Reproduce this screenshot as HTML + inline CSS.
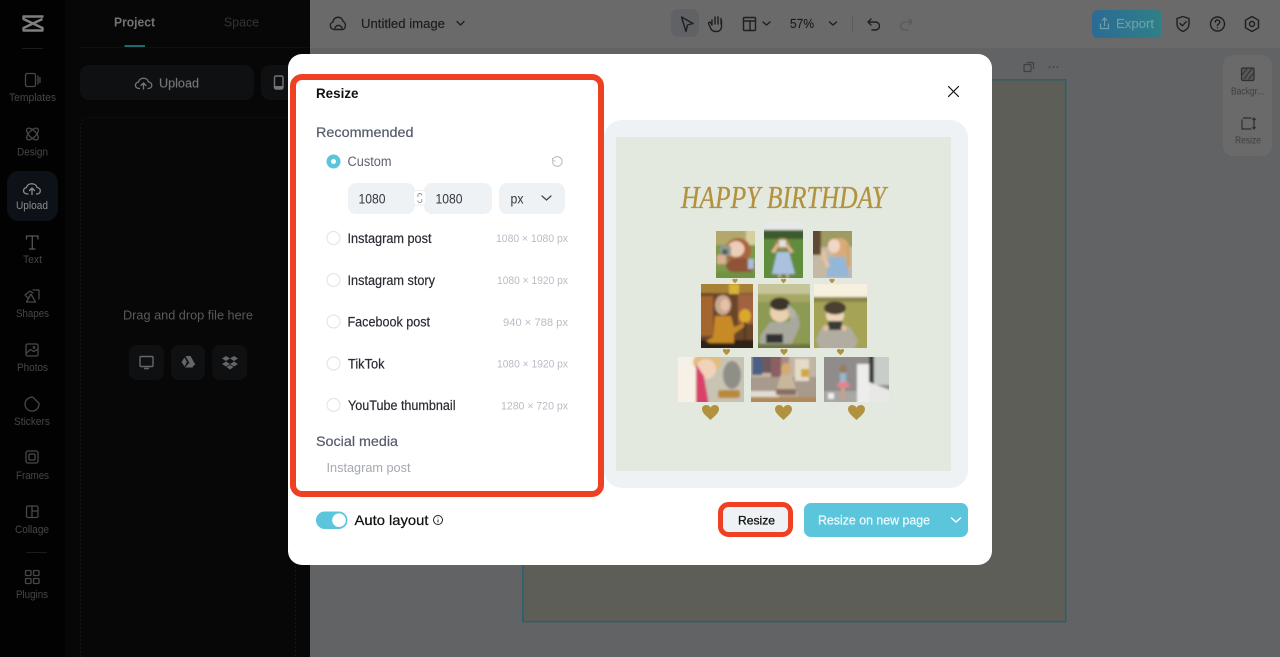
<!DOCTYPE html>
<html><head><meta charset="utf-8"><title>Resize</title>
<style>
html,body{margin:0;padding:0;width:1280px;height:657px;overflow:hidden;background:#626365}
svg{display:block}
text{font-family:"Liberation Sans",sans-serif}
.nav{font-size:11px;fill:#474747}
.ic{fill:none;stroke:#484848;stroke-width:1.3;stroke-linecap:round;stroke-linejoin:round}
.tb{fill:none;stroke:#1f1f1f;stroke-width:1.4;stroke-linecap:round;stroke-linejoin:round}
.row{font-size:13.5px;fill:#2a2c33;stroke:#2a2c33;stroke-width:.2}
.dim{font-size:11px;fill:#b7bcc4}
</style></head><body>
<svg width="1280" height="657" viewBox="0 0 1280 657" xmlns="http://www.w3.org/2000/svg">
<defs>
<path id="hb" d="M0 7.500C-5 3-8.500 0-8.500-3.500C-8.500-6-6.500-7.500-4.500-7.500C-2.500-7.500-.8-6.500 0-4.800C.8-6.500 2.500-7.500 4.500-7.500C6.500-7.500 8.500-6 8.500-3.500C8.500 0 5 3 0 7.500Z"/>
<filter id="b" x="-10%" y="-10%" width="120%" height="120%"><feGaussianBlur stdDeviation="1"/></filter>
<linearGradient id="exp" x1="0" x2="1"><stop offset="0" stop-color="#2b6b95"/><stop offset="1" stop-color="#2f8087"/></linearGradient>
</defs>

<!-- base -->
<rect width="1280" height="657" fill="#626365"/>
<rect x="310" width="970" height="48" fill="#6a6a6a"/>
<rect width="65" height="657" fill="#020202"/>
<rect x="65" width="245" height="657" fill="#070707"/>

<!-- sidebar -->
<path d="M43.500 16.500H23.500V19L42.500 28V30.500H23.500V28L42.500 19" fill="none" stroke="#7e7e7e" stroke-width="2.400" stroke-linejoin="round"/>
<rect x="22" y="48" width="21" height="1" fill="#1b1b1b"/>
<rect x="26" y="552" width="21" height="1" fill="#1b1b1b"/>
<rect x="7" y="171" width="51" height="50" rx="12" fill="#0d1218"/>
<g class="ic">
<rect x="25.500" y="73.500" width="10" height="13" rx="1.500"/><path d="M38 76v8M40 77.500v5"/>
<ellipse cx="32.500" cy="134" rx="7.500" ry="3.500" transform="rotate(-45 32.500 134)"/><ellipse cx="32.500" cy="134" rx="7.500" ry="3.500" transform="rotate(45 32.500 134)"/>
<path d="M32 188v6.500M29.500 190.500l2.500-2.500 2.500 2.500" style="stroke:#8c8c8c"/><path d="M28 194c-6 0-5.500-6-1.500-6.500 1-5 9.500-5 10.500 0 4.500.5 4.500 6.500-.5 6.500" style="stroke:#8c8c8c"/>
<path d="M26.500 239v-3h11.500v3M32.300 236v13M29.500 249h5.500" style="stroke:#555"/>
<path d="M28 298l-3-3 5-4 3 2M33 290h6v9M31 294l-4.500 8h9z"/>
<rect x="26" y="344" width="12" height="12" rx="1.500"/><path d="M26.500 353l4-3.500 3 2 4-2"/><circle cx="34" cy="347.500" r=".7"/>
<path d="M33 397.200a7 7 0 1 0 6 6.300z"/>
<rect x="26" y="451" width="12" height="12" rx="2"/><rect x="29" y="454" width="6" height="6" rx="1"/>
<rect x="26.500" y="506" width="11.500" height="11.500" rx="1.500"/><path d="M32 506v11.500M32 511h6"/>
<rect x="25.500" y="570.500" width="5.500" height="5" rx="1"/><rect x="33.500" y="570.500" width="5.500" height="5" rx="1"/><rect x="25.500" y="578.500" width="5.500" height="5" rx="1"/><rect x="33.500" y="578.500" width="5.500" height="5" rx="1"/>
</g>
<text class="nav" x="9" y="101" textLength="47" lengthAdjust="spacingAndGlyphs">Templates</text>
<text class="nav" x="17" y="155.500" textLength="31" lengthAdjust="spacingAndGlyphs">Design</text>
<text class="nav" x="16" y="209" textLength="32" lengthAdjust="spacingAndGlyphs" style="fill:#8c8c8c">Upload</text>
<text class="nav" x="23" y="263" textLength="19" lengthAdjust="spacingAndGlyphs">Text</text>
<text class="nav" x="16" y="317" textLength="33" lengthAdjust="spacingAndGlyphs">Shapes</text>
<text class="nav" x="17" y="371" textLength="31" lengthAdjust="spacingAndGlyphs">Photos</text>
<text class="nav" x="14" y="425" textLength="36" lengthAdjust="spacingAndGlyphs">Stickers</text>
<text class="nav" x="16" y="479" textLength="33" lengthAdjust="spacingAndGlyphs">Frames</text>
<text class="nav" x="15" y="533" textLength="34" lengthAdjust="spacingAndGlyphs">Collage</text>
<text class="nav" x="16" y="598" textLength="32" lengthAdjust="spacingAndGlyphs">Plugins</text>

<!-- panel -->
<text x="114" y="26.500" font-size="12.500" font-weight="700" fill="#737373" textLength="41" lengthAdjust="spacingAndGlyphs">Project</text>
<text x="224" y="26.500" font-size="12.500" fill="#343434" textLength="35" lengthAdjust="spacingAndGlyphs">Space</text>
<rect x="124.500" y="45" width="20.500" height="2" fill="#1d6a70"/>
<rect x="80" y="47" width="230" height="1" fill="#0f0f0f"/>
<rect x="80" y="65" width="174" height="35" rx="9" fill="#0f1012"/>
<rect x="261" y="65" width="60" height="35" rx="9" fill="#0f1012"/>
<path d="M143.500 83v6M141 85.500l2.500-2.500 2.500 2.500M139.500 88.500c-5.500 0-5-6-1-6.500 1-5 9-5 10 0 4.500.5 4.500 6.500-.5 6.500" fill="none" stroke="#757575" stroke-width="1.300" stroke-linecap="round" stroke-linejoin="round"/>
<text x="159" y="87.500" font-size="13" fill="#767676" stroke="#767676" stroke-width=".15" textLength="40" lengthAdjust="spacingAndGlyphs">Upload</text>
<rect x="274.500" y="76" width="8.500" height="13" rx="1.500" fill="none" stroke="#757575" stroke-width="1.400"/><rect x="275" y="86" width="7.500" height="3" fill="#757575"/>
<rect x="80.500" y="117.500" width="215" height="560" rx="8" fill="none" stroke="#141414" stroke-dasharray="2 2"/>
<text x="123" y="319.500" font-size="13" fill="#5a5a5a" textLength="130" lengthAdjust="spacingAndGlyphs">Drag and drop file here</text>
<rect x="129" y="345" width="35" height="35" rx="8" fill="#0f1012"/>
<rect x="171" y="345" width="34" height="35" rx="8" fill="#0f1012"/>
<rect x="212" y="345" width="35" height="35" rx="8" fill="#0f1012"/>
<rect x="140" y="356.500" width="13" height="10" rx="1" fill="none" stroke="#666" stroke-width="1.400"/><path d="M144 368.500h5" stroke="#666" stroke-width="1.500"/>
<path d="M185.500 356h5l5 9h-5zM184.500 357.500l2.500 4.500-2.500 4.500-3-4.500zM188.500 363.500h6.500l-2.500 4h-7.500z" fill="#666"/>
<path d="M226 356l4 2.500-4 2.500-4-2.500zM234 356l4 2.500-4 2.500-4-2.500zM226 361.500l4 2.500-4 2.500-4-2.500zM234 361.500l4 2.500-4 2.500-4-2.500zM230 365l3.500 2-3.500 2.500-3.500-2.500z" fill="#666"/>

<!-- top toolbar -->
<g class="tb">
<path d="M334.500 29.500c-5 0-5.500-6.500-1.500-7.500 .5-6 9-6.500 10 -.5 3.500 1 3 8-.5 8z"/><path d="M335 28c1.500-3.500 5.500-3.500 7 0"/>
<path d="M457 21.500l3.500 3.500 3.500-3.500"/>
</g>
<rect x="671" y="9" width="28" height="28" rx="7" fill="#606266"/>
<g class="tb">
<path d="M681.500 17l11.500 6.500-5.500 1.500-1.500 6.500-4.500-14.500z"/>
<path d="M712 25v-5M715 24v-7M718 24v-7M721 24v-5.500M712 25l-1.500-2.500c-1-1-2.500.3-1.800 1.500l2.300 5c1 2 3 2.500 5.500 2.500 3 0 5-2 5-5v-6"/>
<rect x="743.500" y="17.500" width="12" height="13" rx="1"/><path d="M743.500 21h12M750 21v9.500"/>
<path d="M763 22l3.500 3 3.500-3M829.500 22l3.500 3 3.500-3"/>
<path d="M871 19l-3 3 3 3M868 22h7c3 0 4.500 2 4.500 4s-1.500 4-4.500 4h-3"/>
</g>
<path d="M852.500 16.500v15" stroke="#5a5a5a"/>
<path d="M909 19l3 3-3 3M912 22h-7c-3 0-4.500 2-4.500 4s1.500 4 4.500 4h3" fill="none" stroke="#5a5a5a" stroke-width="1.300" stroke-linecap="round" stroke-linejoin="round"/>
<text x="361" y="28" font-size="13" fill="#1c1c1c" stroke="#1c1c1c" stroke-width=".15" textLength="84" lengthAdjust="spacingAndGlyphs">Untitled image</text>
<text x="790" y="28" font-size="13" fill="#1c1c1c" stroke="#1c1c1c" stroke-width=".15" textLength="24" lengthAdjust="spacingAndGlyphs">57%</text>
<rect x="1092" y="10" width="70" height="28" rx="6" fill="url(#exp)"/>
<text x="1116" y="28" font-size="13" fill="#6d9fa6" stroke="#6d9fa6" stroke-width=".15" textLength="38" lengthAdjust="spacingAndGlyphs">Export</text>
<path d="M1104.500 18v8M1102 20.500l2.500-2.500 2.500 2.500M1100.500 23.500v5h8v-5" fill="none" stroke="#6d9fa6" stroke-width="1.200"/>
<g class="tb">
<path d="M1183 16.500l6 2v5.500c0 3.500-2.500 6-6 7.500-3.500-1.500-6-4-6-7.500v-5.500zM1180 23.500l2.300 2.300 3.800-4"/>
<circle cx="1217.500" cy="24" r="7"/><path d="M1215.300 22c.3-2.800 4.500-2.500 4.500 0 0 1.800-2.300 1.800-2.300 3.500M1217.500 27.800v.1"/>
<path d="M1252 16.500l6.500 3.700v7.600l-6.500 3.700-6.500-3.700v-7.600z"/><circle cx="1252" cy="24" r="2.500"/>
</g>

<!-- canvas -->
<rect x="522.750" y="79.750" width="543" height="542" fill="#5c5e57" stroke="#2c5f68" stroke-width="1.500"/>
<g fill="none" stroke="#3f4044" stroke-width="1.200"><rect x="1024" y="64.500" width="7" height="7" rx="1"/><path d="M1027 62.500h5.500a1 1 0 0 1 1 1v5.500"/></g>
<g fill="#3f4044"><circle cx="1049.500" cy="67" r=".9"/><circle cx="1053.500" cy="67" r=".9"/><circle cx="1057.500" cy="67" r=".9"/></g>
<rect x="1223" y="55" width="49" height="101" rx="10" fill="#6a6a6a"/>
<rect x="1241.500" y="68" width="12.500" height="12.500" rx="1.500" fill="#585858" stroke="#2e2e2e" stroke-width="1.200"/>
<path d="M1242 75l5-6.500M1244 79l8-10.500M1248.500 79.500l5-6.500" stroke="#2e2e2e" stroke-width="1"/>
<path d="M1242 119.500v9.500h9.500M1243 118h8.500M1254 118v11M1252.500 120l1.500-2 1.500 2M1252.500 127l1.500 2 1.500-2" fill="none" stroke="#2e2e2e" stroke-width="1.200"/>
<text x="1231" y="94.500" font-size="10" fill="#3e3e3e" textLength="33" lengthAdjust="spacingAndGlyphs">Backgr...</text>
<text x="1235" y="143.500" font-size="10" fill="#3e3e3e" textLength="26" lengthAdjust="spacingAndGlyphs">Resize</text>

<!-- modal -->
<rect x="288" y="54" width="704" height="511" rx="14" fill="#fff"/>
<rect x="293" y="77" width="308" height="417" rx="9" fill="#fff" stroke="#ee4023" stroke-width="6"/>
<text x="316" y="98" font-size="14" font-weight="700" fill="#111" textLength="42.500" lengthAdjust="spacingAndGlyphs">Resize</text>
<text x="316" y="137" font-size="14" fill="#555b6a" stroke="#555b6a" stroke-width=".2" textLength="97.500" lengthAdjust="spacingAndGlyphs">Recommended</text>
<path d="M948.500 86.500l10 10M958.500 86.500l-10 10" stroke="#111" stroke-width="1.200" stroke-linecap="round"/>

<circle cx="333.500" cy="161.500" r="7" fill="#5bc5dc"/><circle cx="333.500" cy="161.500" r="2.500" fill="#fff"/>
<text x="347.500" y="166" font-size="13.500" fill="#5d6370" textLength="44" lengthAdjust="spacingAndGlyphs">Custom</text>
<path d="M553.500 158.500a4.800 4.800 0 1 1-1 3.500M552.500 158v3h3" fill="none" stroke="#b9bdc3" stroke-width="1.100"/>

<rect x="348" y="183" width="67" height="31" rx="8" fill="#eef2f5"/>
<rect x="424" y="183" width="68" height="31" rx="8" fill="#eef2f5"/>
<rect x="499" y="183" width="66" height="31" rx="8" fill="#eef2f5"/>
<rect x="413.500" y="190.500" width="12.500" height="14.500" rx="3" fill="#fff" stroke="#eceef0"/>
<path d="M417.800 197v-1.500a2 2 0 0 1 4 0M421.800 199v1.500a2 2 0 0 1-4 0" fill="none" stroke="#8b9098" stroke-width=".9"/>
<text x="358.500" y="203.500" font-size="14" fill="#333842" textLength="27" lengthAdjust="spacingAndGlyphs">1080</text>
<text x="435.500" y="203.500" font-size="14" fill="#333842" textLength="27" lengthAdjust="spacingAndGlyphs">1080</text>
<text x="510.500" y="203.500" font-size="14" fill="#333842" textLength="13" lengthAdjust="spacingAndGlyphs">px</text>
<path d="M542 196l4.500 4 4.500-4" fill="none" stroke="#444a55" stroke-width="1.300" stroke-linecap="round"/>

<g fill="#fff" stroke="#e4e6e9" stroke-width="1.200">
<circle cx="333.500" cy="238" r="6.500"/><circle cx="333.500" cy="280" r="6.500"/><circle cx="333.500" cy="321.500" r="6.500"/><circle cx="333.500" cy="363.500" r="6.500"/><circle cx="333.500" cy="405" r="6.500"/>
</g>
<text class="row" x="347.500" y="243" textLength="84" lengthAdjust="spacingAndGlyphs">Instagram post</text>
<text class="row" x="347.500" y="285" textLength="87.500" lengthAdjust="spacingAndGlyphs">Instagram story</text>
<text class="row" x="347.500" y="326.500" textLength="82.500" lengthAdjust="spacingAndGlyphs">Facebook post</text>
<text class="row" x="348" y="368.500" textLength="36.500" lengthAdjust="spacingAndGlyphs">TikTok</text>
<text class="row" x="348" y="410" textLength="107.500" lengthAdjust="spacingAndGlyphs">YouTube thumbnail</text>
<text class="dim" x="496" y="242" textLength="72" lengthAdjust="spacingAndGlyphs">1080 × 1080 px</text>
<text class="dim" x="497" y="284" textLength="71" lengthAdjust="spacingAndGlyphs">1080 × 1920 px</text>
<text class="dim" x="503" y="326" textLength="65" lengthAdjust="spacingAndGlyphs">940 × 788 px</text>
<text class="dim" x="497" y="367.500" textLength="71" lengthAdjust="spacingAndGlyphs">1080 × 1920 px</text>
<text class="dim" x="501" y="409.500" textLength="67" lengthAdjust="spacingAndGlyphs">1280 × 720 px</text>
<text x="316" y="446" font-size="14" fill="#555b6a" stroke="#555b6a" stroke-width=".2" textLength="82" lengthAdjust="spacingAndGlyphs">Social media</text>
<text x="326.500" y="472" font-size="12.500" fill="#a3a8b2" textLength="84" lengthAdjust="spacingAndGlyphs">Instagram post</text>

<!-- footer -->
<rect x="316" y="511.500" width="31.500" height="17.500" rx="8.750" fill="#5bc5dc"/>
<circle cx="339" cy="520.200" r="6.800" fill="#fff"/>
<text x="354.500" y="525" font-size="14" fill="#111" stroke="#111" stroke-width=".25" textLength="74" lengthAdjust="spacingAndGlyphs">Auto layout</text>
<circle cx="438" cy="520" r="4.500" fill="none" stroke="#222" stroke-width="1"/><path d="M438 519.500v3M438 517.500v.6" stroke="#222" stroke-width="1"/>
<rect x="720.500" y="504.500" width="70" height="30" rx="8" fill="#eef2f5" stroke="#ee4023" stroke-width="5"/>
<text x="738" y="524.500" font-size="12" fill="#111" stroke="#111" stroke-width=".3" textLength="37" lengthAdjust="spacingAndGlyphs">Resize</text>
<rect x="804" y="503" width="164" height="34" rx="7" fill="#5bc5dc"/>
<text x="818" y="524.500" font-size="12.500" fill="#eafafd" stroke="#eafafd" stroke-width=".25" textLength="112" lengthAdjust="spacingAndGlyphs">Resize on new page</text>
<path d="M951.500 518l4.500 4 4.500-4" fill="none" stroke="#fff" stroke-width="1.500" stroke-linecap="round"/>

<!-- preview -->
<rect x="604" y="120" width="364" height="368" rx="18" fill="#eef2f5"/>
<rect x="616" y="137" width="335" height="334" fill="#e3e9df"/>
<text x="681" y="208" style="font-family:'Liberation Serif',serif;font-style:italic" font-size="32" fill="#b3923f" stroke="#b3923f" stroke-width=".3" textLength="205" lengthAdjust="spacingAndGlyphs">HAPPY BIRTHDAY</text>

<!-- photos row 1 -->
<svg x="716" y="231" width="39" height="47"><g filter="url(#b)">
<rect x="-3" y="-3" width="45" height="53" fill="#b4a76c"/><rect x="-3" y="14" width="45" height="36" fill="#7d9a4c"/><rect x="30" y="-3" width="12" height="17" fill="#d8cf9e"/>
<ellipse cx="22" cy="20" rx="13" ry="13" fill="#a9653c"/><ellipse cx="20" cy="18" rx="8.500" ry="8" fill="#eccdb5"/>
<ellipse cx="25" cy="35" rx="15" ry="8" fill="#8f5238"/><rect x="4" y="15" width="11" height="10" fill="#8f9a94"/><circle cx="9" cy="21" r="3" fill="#55605c"/>
<rect x="1" y="24" width="9" height="9" fill="#dcae92"/><rect x="32" y="28" width="6" height="10" fill="#a9bfd4"/>
<rect x="-3" y="41" width="45" height="9" fill="#6f9143"/></g></svg>
<svg x="764" y="222" width="39" height="56"><g filter="url(#b)">
<rect x="-3" y="-3" width="45" height="62" fill="#618c3c"/><rect x="-3" y="-3" width="45" height="12" fill="#e7e9e8"/><rect x="-3" y="8" width="45" height="9" fill="#3c5a2e"/>
<ellipse cx="18.500" cy="22" rx="7" ry="6" fill="#ae8650"/><rect x="15" y="18" width="7" height="7" fill="#dfe2de"/>
<path d="M13 30h12l6 22H8z" fill="#aac2df"/><path d="M7 30l6-9 2 2-4 8zM30 30l-7-9-1 3 4 7z" fill="#e6b595"/><rect x="14" y="52" width="3" height="4" fill="#c99"/><rect x="22" y="52" width="3" height="4" fill="#c99"/></g></svg>
<svg x="813" y="231" width="39" height="47"><g filter="url(#b)">
<rect x="-3" y="-3" width="45" height="53" fill="#c6b9a4"/><rect x="-3" y="-3" width="45" height="19" fill="#9f9a60"/><rect x="-3" y="-3" width="11" height="27" fill="#5f4a30"/>
<ellipse cx="27" cy="17" rx="9" ry="10" fill="#d8ab78"/><ellipse cx="21" cy="15" rx="6" ry="7" fill="#f2d6c4"/>
<path d="M16 26h16l5 20H13z" fill="#93b7d6"/><rect x="8" y="20" width="5" height="7" fill="#e4c39a"/><path d="M9 27h4l4 8-3 2z" fill="#e8c2a6"/><rect x="33" y="14" width="4" height="22" fill="#d3a46d"/></g></svg>
<!-- row 2 -->
<svg x="701" y="284" width="52" height="64"><g filter="url(#b)">
<rect x="-3" y="-3" width="58" height="70" fill="#6a4529"/><rect x="-3" y="-3" width="58" height="12" fill="#a78135"/><rect x="28" y="0" width="10" height="10" fill="#d8b23a"/><rect x="37" y="10" width="18" height="30" fill="#a0623f"/>
<rect x="-3" y="12" width="15" height="40" fill="#a4662e"/><rect x="-3" y="56" width="58" height="11" fill="#2d2018"/>
<ellipse cx="22" cy="21" rx="8" ry="10" fill="#c9a78f"/><ellipse cx="24" cy="21" rx="4.500" ry="6" fill="#e7c0a8"/>
<path d="M14 32h16l3 11 10-4 1 3-11 8v9H9l-4-2 7-4z" fill="#c78a26"/><ellipse cx="44" cy="32" rx="6" ry="7" fill="#dba92a"/><rect x="43" y="38" width="2" height="18" fill="#4a3a22"/></g></svg>
<svg x="758" y="284" width="52" height="64"><g filter="url(#b)">
<rect x="-3" y="-3" width="58" height="70" fill="#8c9a52"/><rect x="-3" y="-3" width="58" height="13" fill="#c6c49a"/><rect x="-3" y="10" width="58" height="8" fill="#a5a864"/>
<ellipse cx="22" cy="28" rx="10" ry="10" fill="#ebd0ad"/><ellipse cx="22" cy="20" rx="10" ry="6.500" fill="#3a342c"/><path d="M30 20l8 8v10l-5-2-3-8z" fill="#b4b2a6"/>
<path d="M2 52l10-14h18l10-8 2 12-10 22H2z" fill="#a9a89d"/><rect x="8" y="50" width="17" height="9" fill="#333"/><rect x="-3" y="60" width="58" height="7" fill="#6e7640"/></g></svg>
<svg x="814" y="284" width="53" height="64"><g filter="url(#b)">
<rect x="-3" y="-3" width="59" height="70" fill="#a5a457"/><rect x="-3" y="-3" width="59" height="20" fill="#f7f0de"/><rect x="-3" y="13" width="59" height="5" fill="#8b8448"/>
<ellipse cx="21" cy="31" rx="9" ry="9" fill="#efd5b8"/><ellipse cx="21" cy="24" rx="11" ry="6.500" fill="#4c4033"/>
<path d="M8 43h28l8 14-5 10H7l-5-11z" fill="#b1ada0"/><rect x="14" y="37" width="14" height="9" fill="#3b3a36"/><circle cx="12" cy="44" r="3" fill="#e1bfa0"/><circle cx="30" cy="44" r="3" fill="#e1bfa0"/></g></svg>
<!-- row 3 -->
<svg x="678" y="357" width="66" height="45"><g filter="url(#b)">
<rect x="-3" y="-3" width="72" height="51" fill="#c8c4b4"/><rect x="-3" y="-3" width="21" height="51" fill="#f6f0e6"/><ellipse cx="54" cy="18" rx="9" ry="14" fill="#8f8f88"/><rect x="40" y="33" width="22" height="8" rx="2" fill="#b98a3e"/>
<ellipse cx="29" cy="5" rx="14" ry="10" fill="#e3bd7c"/><ellipse cx="28" cy="12" rx="10" ry="10" fill="#f1d3bb"/>
<path d="M18 7l8 12 5 29H18z" fill="#d8436a"/></g></svg>
<svg x="751" y="357" width="65" height="45"><g filter="url(#b)">
<rect x="-3" y="-3" width="71" height="51" fill="#a89a8c"/><rect x="-3" y="-3" width="71" height="23" fill="#c3b5a5"/><rect x="1" y="-3" width="10" height="21" fill="#4a5e84"/><rect x="11" y="-3" width="9" height="19" fill="#6d5a60"/><rect x="20" y="-3" width="10" height="23" fill="#8d5e62"/><rect x="30" y="-3" width="8" height="19" fill="#a78b7e"/>
<rect x="44" y="2" width="14" height="22" fill="#e4dcc8"/><rect x="50" y="12" width="8" height="8" fill="#d0a83a"/>
<ellipse cx="35" cy="12" rx="5" ry="6" fill="#d3aa72"/><path d="M29 19h12l6 20H24z" fill="#c8b79c"/><rect x="-3" y="34" width="31" height="14" fill="#e3dcd2"/><rect x="-3" y="40" width="71" height="8" fill="#b08a5c"/><rect x="25" y="32" width="20" height="6" fill="#8a6e66"/></g></svg>
<svg x="824" y="357" width="65" height="45"><g filter="url(#b)">
<rect x="-3" y="-3" width="71" height="51" fill="#908c8b"/><rect x="50" y="-3" width="18" height="31" fill="#c9cdc9"/><rect x="-3" y="34" width="71" height="14" fill="#a9a6a4"/>
<rect x="33" y="7" width="12" height="41" fill="#ededec"/><rect x="45" y="-3" width="5" height="51" fill="#3d3b3a"/><path d="M45 25l23 9v14H45z" fill="#e8e8e6"/>
<ellipse cx="19" cy="12" rx="3.500" ry="4" fill="#9a7a5a"/><rect x="16" y="16" width="6" height="9" fill="#9ab6d0"/><path d="M15 25h9l2 5H13z" fill="#e8828e"/><rect x="17" y="30" width="4" height="11" fill="#c9a08a"/><rect x="4" y="36" width="6" height="6" fill="#eee"/></g></svg>
<g fill="#b3923f">
<use href="#hb" transform="translate(710.500 412.500)"/><use href="#hb" transform="translate(783.500 412.500)"/><use href="#hb" transform="translate(856.500 412.500)"/>
<use href="#hb" transform="translate(726.500 352) scale(.42)"/><use href="#hb" transform="translate(784 352) scale(.42)"/><use href="#hb" transform="translate(840.500 352) scale(.42)"/>
<use href="#hb" transform="translate(735 281) scale(.3)"/><use href="#hb" transform="translate(783.500 281) scale(.3)"/><use href="#hb" transform="translate(832 281) scale(.3)"/>
</g>
</svg>
</body></html>
